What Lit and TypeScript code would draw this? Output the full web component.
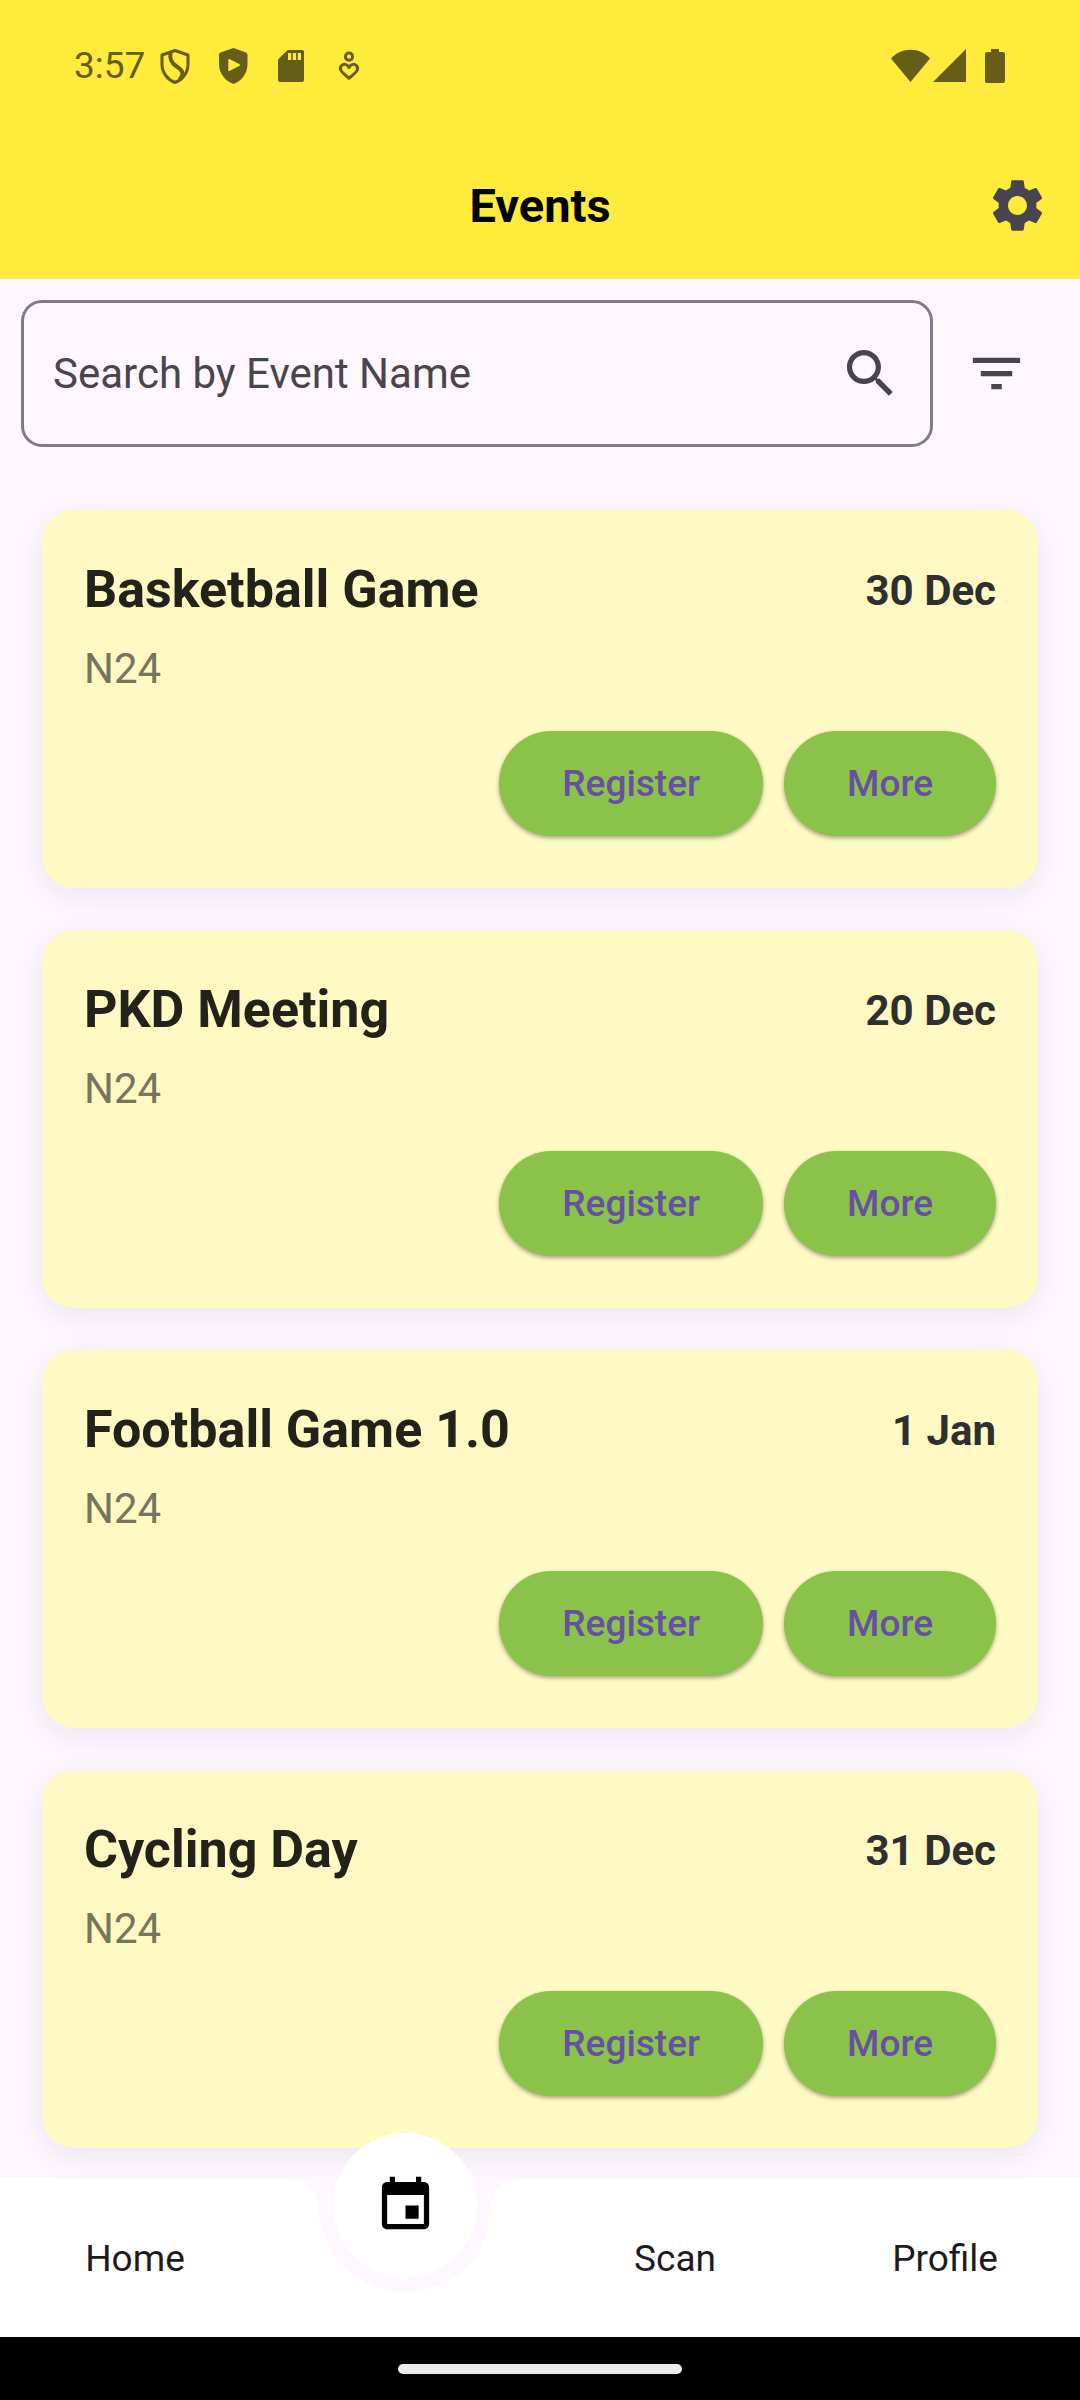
import { LitElement, html, css, svg } from "lit";
import { customElement, property, state } from "lit/decorators.js";

interface EventItem {
  name: string;
  date: string;
  place: string;
}

const EVENTS: EventItem[] = [
  { name: "Basketball Game", date: "30 Dec", place: "N24" },
  { name: "PKD Meeting", date: "20 Dec", place: "N24" },
  { name: "Football Game 1.0", date: "1 Jan", place: "N24" },
  { name: "Cycling Day", date: "31 Dec", place: "N24" },
];

const ICONS = {
  settings:
    "M19.14,12.94c0.04-0.3,0.06-0.61,0.06-0.94c0-0.32-0.02-0.64-0.07-0.94l2.03-1.58c0.18-0.14,0.23-0.41,0.12-0.61l-1.92-3.32c-0.12-0.22-0.37-0.29-0.59-0.22l-2.39,0.96c-0.5-0.38-1.03-0.7-1.62-0.94L14.4,2.81c-0.04-0.24-0.24-0.41-0.48-0.41h-3.84c-0.24,0-0.43,0.17-0.47,0.41L9.25,5.35C8.66,5.59,8.12,5.92,7.63,6.29L5.24,5.33c-0.22-0.08-0.47,0-0.59,0.22L2.74,8.87C2.62,9.08,2.66,9.34,2.86,9.48l2.03,1.58C4.84,11.36,4.8,11.69,4.8,12s0.02,0.64,0.07,0.94l-2.03,1.58c-0.18,0.14-0.23,0.41-0.12,0.61l1.92,3.32c0.12,0.22,0.37,0.29,0.59,0.22l2.39-0.96c0.5,0.38,1.03,0.7,1.62,0.94l0.36,2.54c0.05,0.24,0.24,0.41,0.48,0.41h3.84c0.24,0,0.44-0.17,0.47-0.41l0.36-2.54c0.59-0.24,1.13-0.56,1.62-0.94l2.39,0.96c0.22,0.08,0.47,0,0.59-0.22l1.92-3.32c0.12-0.22,0.07-0.47-0.12-0.61L19.14,12.94z M12,15.6c-1.98,0-3.6-1.62-3.6-3.6s1.62-3.6,3.6-3.6s3.6,1.62,3.6,3.6S13.98,15.6,12,15.6z",
  search:
    "M15.5 14h-.79l-.28-.27C15.41 12.59 16 11.11 16 9.5 16 5.91 13.09 3 9.5 3S3 5.91 3 9.5 5.91 16 9.5 16c1.61 0 3.09-.59 4.23-1.57l.27.28v.79l5 4.99L20.49 19l-4.99-5zm-6 0C7.01 14 5 11.99 5 9.5S7.01 5 9.5 5 14 7.01 14 9.5 11.99 14 9.5 14z",
  filter: "M10 18h4v-2h-4v2zM3 6v2h18V6H3zm3 7h12v-2H6v2z",
  event:
    "M17 12h-5v5h5v-5zM16 1v2H8V1H6v2H5c-1.11 0-1.99.9-1.99 2L3 19c0 1.1.89 2 2 2h14c1.1 0 2-.9 2-2V5c0-1.1-.9-2-2-2h-1V1h-2zm3 18H5V8h14v11z",
};

const icon = (d: string) => html`
  <svg class="icon" viewBox="0 0 24 24" aria-hidden="true">${svg`<path d=${d}></path>`}</svg>
`;

const reset = css`
  :host {
    display: block;
    font-family: Roboto, "Liberation Sans", sans-serif;
  }
  button,
  input {
    font: inherit;
    margin: 0;
    padding: 0;
    border: 0;
    background: none;
    color: inherit;
  }
  button {
    cursor: pointer;
  }
  .icon {
    display: block;
    width: 63px;
    height: 63px;
    fill: currentColor;
  }
`;

@customElement("status-bar")
export class StatusBar extends LitElement {
  static styles = [
    reset,
    css`
      .bar {
        display: flex;
        align-items: center;
        justify-content: space-between;
        height: 132px;
        padding: 0 75px 0 74px;
        color: #665e18;
        font-size: 37px;
        line-height: 44px;
      }
      .group {
        display: flex;
        align-items: center;
      }
      .notices {
        display: flex;
        gap: 16px;
        margin-left: 9px;
      }
      svg {
        display: block;
        fill: currentColor;
      }
      .line {
        fill: none;
        stroke: currentColor;
        stroke-width: 3;
        stroke-linejoin: round;
      }
      .bold {
        stroke-width: 4;
      }
      .battery {
        margin-left: 19px;
      }
    `,
  ];

  render() {
    return html`
      <div class="bar">
        <div class="group">
          <span>3:57</span>
          <div class="notices">
            <svg width="42" height="42" viewBox="0 0 42 42" aria-hidden="true">
              <path class="line" d="M21 5.5 34 10V19.500C34 28 28 35 21 37.500C14 35 8 28 8 19.500V10Z" />
              <path class="line bold" d="M16.500 7.500C15.500 14 17 17.500 22 21C29 25.500 30.500 28.500 25.500 35" />
            </svg>
            <svg width="42" height="42" viewBox="0 0 42 42" aria-hidden="true">
              <path
                fill-rule="evenodd"
                d="M21.500 3 34 7.500Q35.500 8 35.500 10V19C35.500 29 29 36.500 21.500 39C14 36.500 7 29 7 19V10Q7 8 8.500 7.500ZM17.500 14Q16.300 13.600 16.300 15V25Q16.300 26.500 17.500 26L27.500 20.800Q28.800 20 27.500 19.200Z"
              />
            </svg>
            <svg width="42" height="42" viewBox="0 0 42 42" aria-hidden="true">
              <path
                fill-rule="evenodd"
                d="M17.500 5H32Q34 5 34 7V35Q34 37 32 37H10Q8 37 8 35V14.500ZM18 8V15H21.300V8ZM22.800 8V15H26.100V8ZM27.800 8V15H31V8Z"
              />
            </svg>
            <svg width="42" height="42" viewBox="0 0 42 42" aria-hidden="true">
              <circle class="line" cx="21" cy="11.7" r="3.6" />
              <path
                class="line"
                d="M21 22.500C19 18.800 15.500 18.600 13.600 20.500C11.500 23 12.500 25.500 14.500 27.500L21 33.300L27.500 27.500C29.500 25.500 30.500 23 28.400 20.500C26.500 18.600 23 18.800 21 22.500Z"
              />
            </svg>
          </div>
        </div>
        <div class="group">
          <svg width="42" height="34" viewBox="0 0 42 34" aria-hidden="true">
            <path d="M0 9.500C5 4 12 .7 19.500 .7S34 4 39 9.500L19.500 33Z" />
          </svg>
          <svg width="33" height="34" viewBox="0 0 33 34" aria-hidden="true"><path d="M33 0V33H0Z" /></svg>
          <svg class="battery" width="20" height="34" viewBox="0 0 20 34" aria-hidden="true">
            <path d="M6 0H14V3H18Q20 3 20 5V32Q20 34 18 34H2Q0 34 0 32V5Q0 3 2 3H6Z" />
          </svg>
        </div>
      </div>
    `;
  }
}

@customElement("event-card")
export class EventCard extends LitElement {
  @property({ attribute: false }) event!: EventItem;

  static styles = [
    reset,
    css`
      .card {
        display: flex;
        flex-direction: column;
        padding: 43px 42px 52px;
        border-radius: 32px;
        background: #fff9c4;
        box-shadow: 0 8px 32px rgba(30, 10, 50, 0.08);
      }
      .head {
        display: flex;
        align-items: center;
        justify-content: space-between;
      }
      .name {
        margin: 0;
        color: #22211a;
        font-size: 52px;
        font-weight: 700;
        line-height: 74px;
      }
      .date {
        color: #2f2f2f;
        font-size: 42px;
        font-weight: 700;
        line-height: 63px;
      }
      .place {
        margin: 10px 0 31px;
        color: #77755c;
        font-size: 42px;
        line-height: 63px;
      }
      .actions {
        display: flex;
        justify-content: flex-end;
        gap: 21px;
      }
      .action {
        height: 105px;
        padding: 0 63px;
        border-radius: 53px;
        background: #8bc34a;
        box-shadow: 0 2px 4px rgba(0, 0, 0, 0.35);
        color: #6750a4;
        font-size: 37px;
        font-weight: 500;
      }
    `,
  ];

  render() {
    const { name, date, place } = this.event;
    return html`
      <article class="card">
        <div class="head">
          <h2 class="name">${name}</h2>
          <time class="date">${date}</time>
        </div>
        <p class="place">${place}</p>
        <div class="actions">
          <button class="action" type="button">Register</button>
          <button class="action" type="button">More</button>
        </div>
      </article>
    `;
  }
}

@customElement("bottom-nav")
export class BottomNav extends LitElement {
  static styles = [
    reset,
    css`
      .nav {
        display: grid;
        grid-template-columns: repeat(4, 1fr);
        height: 158px;
        background: #ffffff;
      }
      .link {
        display: flex;
        align-items: center;
        justify-content: center;
        padding-top: 2px;
        color: #1d1b20;
        font-size: 37px;
        line-height: 44px;
        text-decoration: none;
      }
      .current {
        position: relative;
        color: #000000;
      }
      .notch {
        position: absolute;
        top: 0;
        left: 50%;
        width: 240px;
        margin-left: -120px;
        fill: #fef7ff;
      }
      .bubble {
        position: absolute;
        top: -46px;
        left: 50%;
        display: grid;
        place-items: center;
        width: 144px;
        height: 144px;
        margin-left: -72px;
        border-radius: 50%;
        background: #ffffff;
      }
    `,
  ];

  render() {
    return html`
      <nav class="nav" aria-label="Main">
        <a class="link" href="#home">Home</a>
        <a class="link current" href="#events" aria-label="Events" aria-current="page">
          <svg class="notch" viewBox="0 0 240 114" aria-hidden="true">
            <path d="M0 0C20 0 32 7 33 26A87 87 0 0 0 207 26C208 7 220 0 240 0Z" />
          </svg>
          <span class="bubble">${icon(ICONS.event)}</span>
        </a>
        <a class="link" href="#scan">Scan</a>
        <a class="link" href="#profile">Profile</a>
      </nav>
    `;
  }
}

@customElement("app-root")
export class AppRoot extends LitElement {
  @state() private query = "";

  static styles = [
    reset,
    css`
      .page {
        display: flex;
        flex-direction: column;
        min-height: 100vh;
        background: #fef7ff;
      }
      .top {
        background: #ffeb3b;
      }
      .app-bar {
        display: grid;
        grid-template-columns: 126px 1fr 126px;
        align-items: center;
        height: 147px;
      }
      .title {
        grid-column: 2;
        margin: 0;
        color: #000000;
        font-size: 47px;
        font-weight: 700;
        line-height: 56px;
        text-align: center;
      }
      .icon-button {
        display: grid;
        place-items: center;
        width: 126px;
        height: 126px;
        color: #49454f;
      }
      .search-row {
        display: flex;
        align-items: center;
        padding: 21px;
      }
      .field {
        box-sizing: border-box;
        display: flex;
        flex: 1;
        align-items: center;
        min-width: 0;
        height: 147px;
        padding-left: 29px;
        border: 3px solid #807b85;
        border-radius: 21px;
        color: #49454f;
      }
      .input {
        flex: 1;
        min-width: 0;
        height: 62px;
        outline: 0;
        font-size: 42px;
      }
      .input::placeholder {
        color: #49454f;
        opacity: 1;
      }
      .field .icon-button {
        width: 120px;
      }
      .list {
        display: flex;
        flex: 1;
        flex-direction: column;
        gap: 42px;
        padding: 42px 42px 31px;
        overflow: hidden;
      }
      .bottom {
        position: relative;
      }
      .gesture {
        display: grid;
        place-items: center;
        height: 63px;
        background: #000000;
      }
      .handle {
        width: 284px;
        height: 10px;
        border-radius: 5px;
        background: #ebebeb;
      }
    `,
  ];

  private onInput(e: Event) {
    this.query = (e.target as HTMLInputElement).value;
  }

  render() {
    const needle = this.query.trim().toLowerCase();
    const shown = EVENTS.filter((e) => e.name.toLowerCase().includes(needle));
    return html`
      <div class="page">
        <header class="top">
          <status-bar></status-bar>
          <div class="app-bar">
            <h1 class="title">Events</h1>
            <button class="icon-button" type="button" aria-label="Settings">${icon(ICONS.settings)}</button>
          </div>
        </header>
        <div class="search-row">
          <div class="field">
            <input
              class="input"
              type="text"
              aria-label="Search by Event Name"
              placeholder="Search by Event Name"
              .value=${this.query}
              @input=${this.onInput}
            />
            <button class="icon-button" type="button" aria-label="Search">${icon(ICONS.search)}</button>
          </div>
          <button class="icon-button" type="button" aria-label="Filter">${icon(ICONS.filter)}</button>
        </div>
        <main class="list">${shown.map((e) => html`<event-card .event=${e}></event-card>`)}</main>
        <footer class="bottom">
          <bottom-nav></bottom-nav>
          <div class="gesture"><div class="handle"></div></div>
        </footer>
      </div>
    `;
  }
}
